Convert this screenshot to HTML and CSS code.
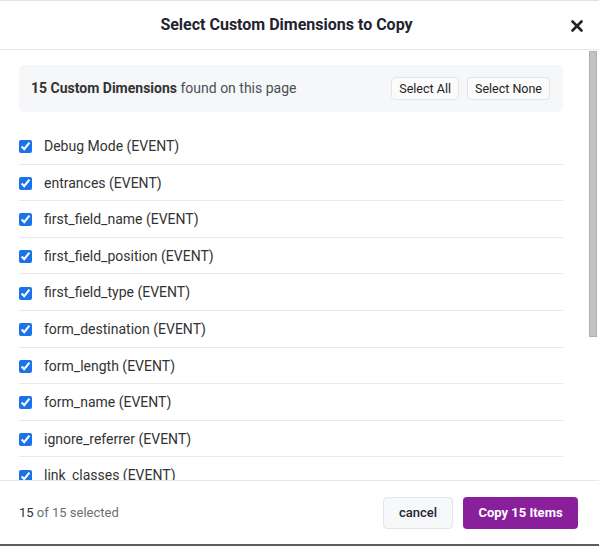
FILE: index.html
```html
<!DOCTYPE html>
<html>
<head>
<meta charset="utf-8">
<link rel="stylesheet" href="styles.css">
</head>
<body>
<div class="dialog">
  <header class="dlg-header">
    <h1 class="dlg-title">Select Custom Dimensions to Copy</h1>
    <button class="close-btn" aria-label="Close">
      <svg width="12" height="12" viewBox="0 0 12 12"><path d="M1.5 1.5 L10.5 10.5 M10.5 1.5 L1.5 10.5" stroke="#222" stroke-width="2.6" stroke-linecap="round"/></svg>
    </button>
  </header>
  <div class="dlg-main">
    <div class="dlg-body">
      <div class="info-box">
        <div class="info-text"><strong>15 Custom Dimensions</strong> found on this page</div>
        <div class="info-actions">
          <button class="small-btn">Select All</button>
          <button class="small-btn">Select None</button>
        </div>
      </div>
      <ul class="dim-list">
        <li class="dim-row"><input type="checkbox" checked><span>Debug Mode (EVENT)</span></li>
        <li class="dim-row"><input type="checkbox" checked><span>entrances (EVENT)</span></li>
        <li class="dim-row"><input type="checkbox" checked><span>first_field_name (EVENT)</span></li>
        <li class="dim-row"><input type="checkbox" checked><span>first_field_position (EVENT)</span></li>
        <li class="dim-row"><input type="checkbox" checked><span>first_field_type (EVENT)</span></li>
        <li class="dim-row"><input type="checkbox" checked><span>form_destination (EVENT)</span></li>
        <li class="dim-row"><input type="checkbox" checked><span>form_length (EVENT)</span></li>
        <li class="dim-row"><input type="checkbox" checked><span>form_name (EVENT)</span></li>
        <li class="dim-row"><input type="checkbox" checked><span>ignore_referrer (EVENT)</span></li>
        <li class="dim-row"><input type="checkbox" checked><span>link_classes (EVENT)</span></li>
        <li class="dim-row"><input type="checkbox" checked><span>link_domain (EVENT)</span></li>
        <li class="dim-row"><input type="checkbox" checked><span>link_id (EVENT)</span></li>
        <li class="dim-row"><input type="checkbox" checked><span>link_url (EVENT)</span></li>
        <li class="dim-row"><input type="checkbox" checked><span>outbound (EVENT)</span></li>
        <li class="dim-row"><input type="checkbox" checked><span>percent_scrolled (EVENT)</span></li>
      </ul>
    </div>
    <div class="scroll-track"><div class="scroll-thumb"></div></div>
  </div>
  <footer class="dlg-footer">
    <div class="count"><span class="count-num">15</span> of 15 selected</div>
    <div class="footer-actions">
      <button class="btn-cancel">cancel</button>
      <button class="btn-primary">Copy 15 Items</button>
    </div>
  </footer>
</div>
</body>
</html>
```
FILE: styles.css
```css
* { box-sizing: border-box; }
html, body { margin: 0; padding: 0; }
body {
  background: #5c5c5c;
  font-family: Roboto, "Liberation Sans", Arial, sans-serif;
  width: 599px;
  height: 546px;
  overflow: hidden;
}
.dialog {
  width: 599px;
  height: 544px;
  background: #fff;
  border-top: 1px solid #e2e2e2;
  display: flex;
  flex-direction: column;
}
.dlg-header {
  height: 49px;
  flex: none;
  border-bottom: 1px solid #e5e7eb;
  display: flex;
  align-items: center;
  padding: 0 10px 0 8px;
}
.dlg-title {
  flex: 1;
  margin: 0;
  text-align: center;
  font-size: 16px;
  font-weight: 700;
  color: #1f2430;
  line-height: 20px;
}
.close-btn {
  width: 24px;
  height: 24px;
  border: 0;
  background: none;
  padding: 0;
  display: flex;
  align-items: center;
  justify-content: center;
  margin-top: 2px;
}
.dlg-main {
  height: 430px;
  flex: none;
  display: flex;
}
.dlg-body {
  flex: 1;
  min-width: 0;
  overflow: hidden;
  padding: 15px 25px 20px 19px;
}
.scroll-track {
  width: 11px;
  flex: none;
  background: #fff;
  padding: 1px 2px 0 1px;
}
.scroll-thumb {
  height: 286px;
  background: #c2c2c2;
  border: 1px solid #b0b0b0;
}
.info-box {
  height: 47px;
  background: #f6f7f9;
  border-radius: 5px;
  display: flex;
  align-items: center;
  justify-content: space-between;
  padding: 0 13px 0 12px;
}
.info-text {
  font-size: 14px;
  color: #4a4f57;
  margin-top: -1px;
}
.info-text strong { color: #333; font-weight: 700; }
.info-actions { display: flex; gap: 8px; }
.small-btn {
  height: 23px;
  font-family: inherit;
  font-size: 12.5px;
  color: #222;
  background: #fbfbfc;
  border: 1px solid #e3e5e8;
  border-radius: 4px;
  padding: 0 7px;
}
.dim-list {
  list-style: none;
  margin: 16px 0 0;
  padding: 0;
}
.dim-row {
  display: flex;
  align-items: center;
  gap: 12px;
  padding: 9px 0 7px;
  line-height: 1.4;
  font-size: 14px;
  color: #333;
  border-bottom: 1px solid #e8e9eb;
}
.dim-row:last-child { border-bottom: 0; }
.dim-row input {
  margin: 0;
  width: 13px;
  height: 13px;
  accent-color: #1a73e8;
}
.dlg-footer {
  flex: 1;
  border-top: 1px solid #e5e7eb;
  display: flex;
  align-items: center;
  justify-content: space-between;
  padding: 0 21px 0 19px;
}
.count { font-size: 13px; color: #6b6f76; margin-top: -1px; }
.count-num { color: #2a2f3a; }
.footer-actions { display: flex; gap: 10px; }
.btn-cancel {
  height: 32px;
  width: 70px;
  font-family: inherit;
  font-size: 13px;
  font-weight: 500;
  color: #1f2430;
  background: #f7f8fa;
  border: 1px solid #e3e5e8;
  border-radius: 4px;
}
.btn-primary {
  height: 32px;
  width: 115px;
  font-family: inherit;
  font-size: 13px;
  font-weight: 700;
  color: #fff;
  background: #8a1f9b;
  border: 0;
  border-radius: 4px;
}
```
